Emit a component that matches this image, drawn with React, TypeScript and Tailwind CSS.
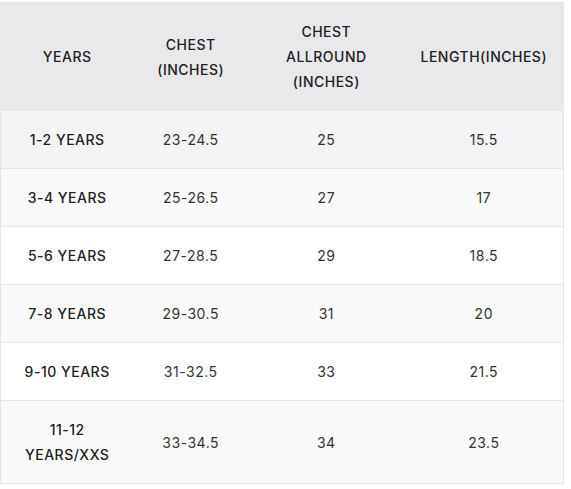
import React from "react";

const rows = [
  { years: "1-2 YEARS", chest: "23-24.5", allround: "25", length: "15.5" },
  { years: "3-4 YEARS", chest: "25-26.5", allround: "27", length: "17" },
  { years: "5-6 YEARS", chest: "27-28.5", allround: "29", length: "18.5" },
  { years: "7-8 YEARS", chest: "29-30.5", allround: "31", length: "20" },
  { years: "9-10 YEARS", chest: "31-32.5", allround: "33", length: "21.5" },
  { years: "11-12 YEARS/XXS", chest: "33-34.5", allround: "34", length: "23.5" },
];

const rowBg = (i: number) => {
  if (i === 0) return "bg-[#f4f4f6]";
  return i % 2 === 1 ? "bg-[#fafafa]" : "bg-white";
};

export default function App() {
  return (
    <div className="bg-white min-h-[489px] pt-[2px] font-['Inter',sans-serif]">
      <table className="w-[564px] border-collapse border border-[#e6e6e6] text-center text-[14px] leading-[25px] tracking-[0.5px] text-[#333]">
        <colgroup>
          <col className="w-[133px]" />
          <col className="w-[115px]" />
          <col className="w-[157px]" />
          <col className="w-[159px]" />
        </colgroup>
        <thead>
          <tr className="bg-[#e9e8eb] text-[#222] font-medium">
            <th className="py-[16px] px-2 font-medium">YEARS</th>
            <th className="py-[16px] px-2 font-medium">
              CHEST
              <br />
              (INCHES)
            </th>
            <th className="py-[16px] px-2 font-medium">
              CHEST
              <br />
              ALLROUND
              <br />
              (INCHES)
            </th>
            <th className="py-[16px] px-2 font-medium">LENGTH(INCHES)</th>
          </tr>
        </thead>
        <tbody>
          {rows.map((r, i) => (
            <tr key={i} className={`${rowBg(i)} border-t border-[#e6e6e6]`}>
              <td className="py-[16px] px-3 font-medium text-[#222]">
                {r.years === "11-12 YEARS/XXS" ? (
                  <>
                    11-12
                    <br />
                    YEARS/XXS
                  </>
                ) : (
                  r.years
                )}
              </td>
              <td className="py-[16px] px-2">{r.chest}</td>
              <td className="py-[16px] px-2">{r.allround}</td>
              <td className="py-[16px] px-2">{r.length}</td>
            </tr>
          ))}
        </tbody>
      </table>
    </div>
  );
}
